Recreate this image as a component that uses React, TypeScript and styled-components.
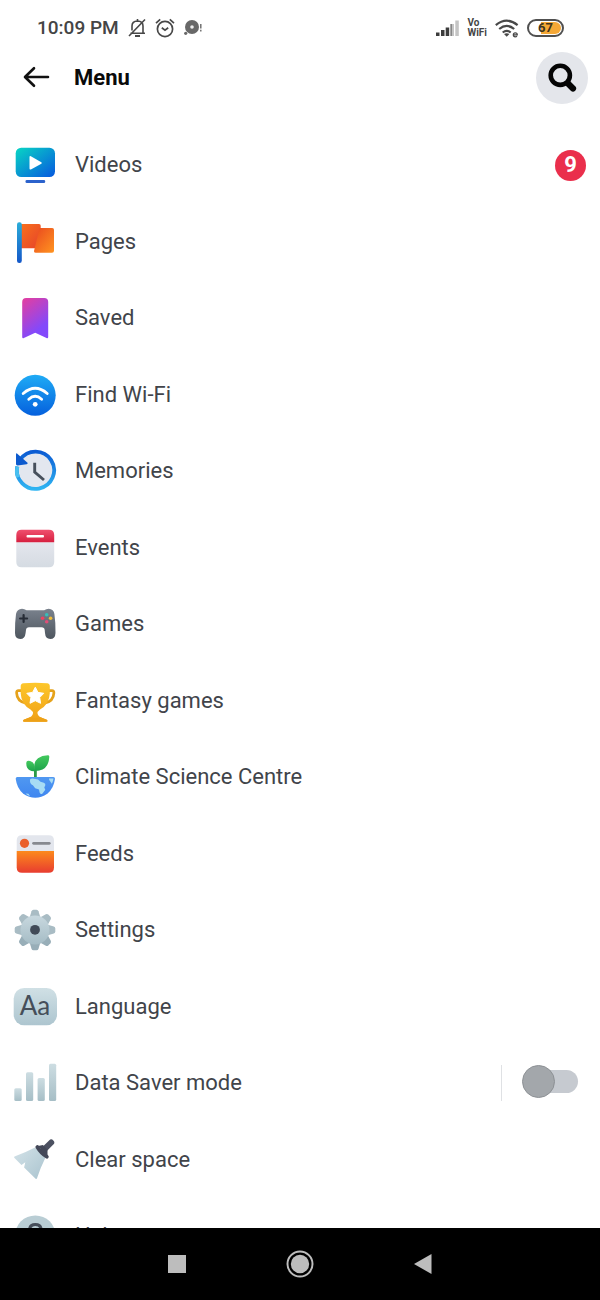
import React from "react";
import type { ReactNode } from "react";
import styled, { createGlobalStyle } from "styled-components";

const GlobalStyle = createGlobalStyle`
  *, *::before, *::after { box-sizing: border-box; }
  body {
    margin: 0;
    background: #fff;
    font-family: Roboto, "Liberation Sans", sans-serif;
  }
`;

const Screen = styled.div`
  display: flex;
  flex-direction: column;
  height: 100vh;
  background: #fff;
`;

const StatusBar = styled.div`
  display: flex;
  flex: none;
  align-items: center;
  justify-content: space-between;
  height: 52px;
  padding: 4px 36px 0 37px;
  color: #454545;
`;

const StatusGroup = styled.div<{ $gap: number }>`
  display: flex;
  align-items: center;
  gap: ${({ $gap }) => $gap}px;
`;

const Time = styled.span`
  font-size: 19px;
  font-weight: 500;
  line-height: 24px;
`;

const Carrier = styled.span`
  display: flex;
  flex-direction: column;
  font-size: 10px;
  font-weight: 700;
  line-height: 10px;
`;

const Battery = styled.span`
  display: flex;
  align-items: center;
  justify-content: center;
  width: 37px;
  height: 18px;
  padding: 1px;
  border: 2px solid #505050;
  border-radius: 9px;
  background: linear-gradient(90deg, #fff 35%, #f5a836 35%) content-box;
  color: #40331c;
  font-size: 13px;
  font-weight: 700;
  line-height: 12px;
`;

const Header = styled.header`
  display: flex;
  flex: none;
  align-items: center;
  height: 52px;
  padding: 0 12px 0 20px;
`;

const IconButton = styled.button`
  display: flex;
  align-items: center;
  justify-content: center;
  width: 32px;
  height: 32px;
  padding: 0;
  border: 0;
  background: none;
  cursor: pointer;
`;

const SearchButton = styled(IconButton)`
  width: 52px;
  height: 52px;
  border-radius: 50%;
  background: #e4e6eb;
`;

const Title = styled.h1`
  flex: 1;
  margin: 0 0 0 22px;
  color: #0a0a0a;
  font-size: 22px;
  font-weight: 700;
  line-height: 28px;
`;

const Main = styled.main`
  flex: 1;
  min-height: 0;
  overflow-y: auto;
  scrollbar-width: none;
`;

const List = styled.ul`
  margin: 0;
  padding: 23px 0 0;
  list-style: none;
`;

const Row = styled.li`
  display: flex;
  align-items: center;
  height: 76px;
  padding-right: 14px;
  &:nth-child(even) { height: 77px; }
`;

const RowLink = styled.a`
  display: flex;
  flex: 1;
  align-items: center;
  gap: 18px;
  height: 100%;
  padding-left: 13px;
  color: #41444a;
  font-size: 22px;
  line-height: 28px;
  text-decoration: none;
`;

const RowIcon = styled.svg`
  display: block;
  flex: none;
  width: 44px;
  height: 44px;
`;

const Badge = styled.span`
  display: flex;
  align-items: center;
  justify-content: center;
  width: 31px;
  height: 31px;
  border-radius: 50%;
  background: #ea2f4c;
  color: #fff;
  font-size: 22px;
  font-weight: 700;
  line-height: 28px;
`;

const ToggleArea = styled.div`
  display: flex;
  align-items: center;
  height: 36px;
  padding: 0 8px 4px 20px;
  border-left: 1px solid #dfe1e4;
`;

const ToggleTrack = styled.span`
  display: grid;
  align-items: center;
  &::before {
    content: "";
    grid-area: 1 / 1;
    height: 23px;
    margin-left: 6px;
    border-radius: 12px;
    background: #c6cad0;
  }
`;

const Toggle = styled.input`
  display: flex;
  grid-area: 1 / 1;
  align-items: center;
  appearance: none;
  width: 56px;
  height: 33px;
  margin: 0;
  cursor: pointer;
  &::before {
    content: "";
    width: 33px;
    height: 33px;
    border: 1px solid #8d9195;
    border-radius: 50%;
    background: #a3a7ab;
  }
  &:checked { justify-content: flex-end; }
`;

const SystemNav = styled.nav`
  display: flex;
  flex: none;
  align-items: center;
  justify-content: center;
  gap: 75px;
  height: 72px;
  background: #000;
`;

const NavButton = styled(IconButton)`
  width: 48px;
  height: 48px;
`;

type GradientProps = { id: string; from: string; to: string; diagonal?: boolean };

const Gradient = ({ id, from, to, diagonal }: GradientProps) => (
  <linearGradient id={id} x1="0" y1="0" x2={diagonal ? "1" : "0"} y2="1">
    <stop offset="0" stopColor={from} />
    <stop offset="1" stopColor={to} />
  </linearGradient>
);

const Icon = ({ children }: { children: ReactNode }) => (
  <RowIcon viewBox="0 0 44 44" aria-hidden="true">{children}</RowIcon>
);

const VideosIcon = () => (
  <Icon>
    <defs><Gradient id="tv" from="#08d6c4" to="#0758df" diagonal /></defs>
    <rect x="2.7" y="4.7" width="39.3" height="29.3" rx="5.5" fill="url(#tv)" />
    <path d="M16.5 14v11.5q0 1.6 1.4.9l10.4-5.600q1.200-.8 0-1.600l-10.400-6q-1.400-.7-1.400.8z" fill="#fff" />
    <rect x="12.5" y="37" width="19.7" height="3" rx="1.3" fill="#2b62cc" />
  </Icon>
);

const PagesIcon = () => (
  <Icon>
    <defs>
      <Gradient id="flagBack" from="#f8701c" to="#e6432b" diagonal />
      <Gradient id="flagFront" from="#e9471f" to="#ff9420" diagonal />
      <Gradient id="pole" from="#2badd9" to="#1457c9" />
    </defs>
    <path d="M8 4h18q1.700 0 1.700 1.800V28.300H8z" fill="url(#flagBack)" />
    <path d="M26.500 8h12.700q1.800 0 1.800 1.800v20.900q0 2-2 2H22.500q-1.800 0-1.500-1.700z" fill="url(#flagFront)" />
    <rect x="4" y="2.300" width="4.800" height="40.700" rx="2.200" fill="url(#pole)" />
  </Icon>
);

const SavedIcon = () => (
  <Icon>
    <defs>
      <linearGradient id="saved" x1="0.2" y1="0" x2="0.6" y2="0.8">
        <stop offset="0" stopColor="#dd3fa6" />
        <stop offset="1" stopColor="#8349fb" />
      </linearGradient>
    </defs>
    <path d="M9.200 6q0-4 4-4h18q4 0 4 4v35q0 1.800-1.700 1.100L22.200 36.800 10.900 42.100q-1.700.7-1.700-1.100z" fill="url(#saved)" />
  </Icon>
);

const WifiIcon = () => (
  <Icon>
    <defs><Gradient id="wifi" from="#1fabf5" to="#0560dd" /></defs>
    <circle cx="22.200" cy="22.300" r="20.500" fill="url(#wifi)" />
    <g fill="none" stroke="#fff" strokeWidth="2.900" strokeLinecap="round">
      <path d="M10.200 20.500q12-10.300 24 0" />
      <path d="M15.800 26.200q6.400-5.800 12.800 0" />
    </g>
    <circle cx="22.200" cy="31.300" r="2.400" fill="#fff" />
  </Icon>
);

const MemoriesIcon = () => (
  <Icon>
    <defs><Gradient id="ring" from="#0b5bd3" to="#2fb4f2" /></defs>
    <circle cx="22.300" cy="22" r="18.600" fill="#e3e7ef" />
    <path d="M7.200 10.700A18.600 18.600 0 1 1 4.300 17.500" fill="none" stroke="url(#ring)" strokeWidth="3.800" />
    <path d="M4.300 17.500a18.600 18.600 0 0 0 .6 10.800" fill="none" stroke="#48c0f0" strokeWidth="3.800" />
    <path d="M3 5.300q0-1.700 1.300-.6l9.900 8.900q1.300 1.300-.5 1.600L4.500 16.400Q3 16.500 3 15z" fill="#0c5ace" />
    <path d="M21.700 13.800V23l9.300 8" fill="none" stroke="#47505c" strokeWidth="2.900" />
  </Icon>
);

const EventsIcon = () => (
  <Icon>
    <defs>
      <Gradient id="calTop" from="#f0506f" to="#d61f3f" />
      <Gradient id="calPage" from="#e4e6ed" to="#d5dbe2" />
    </defs>
    <path d="M3.300 16.300H41.200V36q0 5.300-5.300 5.300H8.600Q3.300 41.300 3.300 36z" fill="url(#calPage)" />
    <path d="M3.300 16.300V9q0-5.300 5.300-5.300h27.300q5.300 0 5.300 5.300v7.300z" fill="url(#calTop)" />
    <rect x="13.500" y="9" width="17.500" height="2.600" rx="1" fill="#fff" />
  </Icon>
);

const GamesIcon = () => (
  <Icon>
    <defs><Gradient id="pad" from="#7a828d" to="#4e565f" /></defs>
    <path d="M3 12Q4 7 9 6.700q2.500 0 4.500 1.600h17.700q2-1.600 4.500-1.600 5 .3 5.700 5.300 1.300 9 1.100 19-.2 6-5.300 6-4.800-.2-5.200-6l-.3-3q-.3-2.700-3-2.700H16q-2.700 0-3 2.700l-.4 3Q12 37 7.200 37 2.100 36.800 2 31q-.2-10 1-19z" fill="url(#pad)" />
    <path d="M10.600 13v7M7.100 16.500h7" stroke="#262c36" strokeWidth="2.200" strokeLinecap="round" />
    <circle cx="33.700" cy="12.800" r="1.800" fill="#36bfb9" />
    <circle cx="29.600" cy="16.300" r="1.800" fill="#ef4260" />
    <circle cx="37.600" cy="16.300" r="1.800" fill="#f0bd3a" />
    <circle cx="33.700" cy="19.800" r="1.800" fill="#e04f78" />
  </Icon>
);

const TrophyIcon = () => (
  <Icon>
    <defs><Gradient id="cup" from="#fdc72b" to="#f0a017" /></defs>
    <g fill="none" stroke="#e5a21b" strokeWidth="2.700">
      <path d="M9 11.700H5.500q-2 0-1.900 2.200Q4 22.500 13 24.200" />
      <path d="M35.500 11.700H39q2 0 1.900 2.200-.4 8.600-9.400 10.300" />
    </g>
    <path d="M7.700 7.300q0-2.700 2.700-3 12-1 23.700 0 2.700.3 2.700 3v7Q36.300 25.500 27 30.500L24.500 33q-.3 3.500 3 5.300l6.300 2.400q1.600 1.800-.6 2H11.300q-2.200-.2-.6-2l6.300-2.400q3.300-1.800 3-5.300l-2.500-2.500Q8.200 25.500 7.700 14.300z" fill="url(#cup)" />
    <path d="M17 38.300Q22 40.300 27.500 38.300l6.300 2.400q1.600 1.800-.6 2H11.300q-2.200-.2-.6-2z" fill="#eda117" />
    <path d="M22.300 8.200l2.700 5.200 5.800.9-4.100 4.200.9 5.800-5.300-2.600-5.300 2.600.9-5.800-4.100-4.200 5.800-.9z" fill="#fff" stroke="#fff" strokeWidth="1" strokeLinejoin="round" />
  </Icon>
);

const ClimateIcon = () => (
  <Icon>
    <defs>
      <Gradient id="leaf" from="#44ca5e" to="#1ea34a" />
      <Gradient id="globe" from="#5098f1" to="#3f86f0" />
    </defs>
    <path d="M4.400 22H40.300q1.800 0 1.700 1.800Q40.800 33.500 34.300 38.700 28.500 42.700 22.300 42.700T10.300 38.700Q3.900 33.500 2.700 23.800 2.600 22 4.400 22z" fill="url(#globe)" />
    <path d="M17 24.500q1.500-1.500 4-.8l4 .8 2.500 2.300 3.300.9q2 .6 1.500 2.600l-1 2.200 1 2.300-2.800 3.600q-1.600 1.600-2.800-.6l-.7-3.300-3.800-1.200-2.300-3q-3.200-1.500-2.900-4.800zM36 23.500h4.500q-.4 3-1.600 5.200L36.200 25zM12.500 38.500l3 .2 1.500 2.500q-3-.8-4.500-2.700z" fill="#a7dcf4" />
    <path d="M22.400 22v-8" stroke="#2b9a46" strokeWidth="2.800" />
    <path d="M21.500 15.500Q20 7 25 3.200 29 .3 34.800.2q1.700 0 1.500 1.800-.8 12-10 13.400-2.300.4-4.800.1z" fill="url(#leaf)" />
    <path d="M21.800 16.200q-5.400.5-7.600-3.400-1.100-2.300-.9-5 .1-2 2-2 4.200.2 5.800 3.600 1.100 3 .7 6.800z" fill="url(#leaf)" />
  </Icon>
);

const FeedsIcon = () => (
  <Icon>
    <defs><Gradient id="feed" from="#fc8a1c" to="#e83d30" /></defs>
    <path d="M3.700 19V8.600q0-5.300 5.300-5.300h26.700Q41 3.300 41 8.600V19z" fill="#e3e6ed" />
    <path d="M3.700 19H41v16.400q0 5.300-5.300 5.300H9q-5.300 0-5.300-5.300z" fill="url(#feed)" />
    <circle cx="11.500" cy="11.300" r="4.600" fill="#ea602c" />
    <path d="M20.500 11.300h15.800" stroke="#87898f" strokeWidth="2.700" strokeLinecap="round" />
  </Icon>
);

const teeth = [0, 45, 90, 135, 180, 225, 270, 315];

const SettingsIcon = () => (
  <Icon>
    <defs><Gradient id="gear" from="#c8d8df" to="#a5bcc5" /></defs>
    {teeth.map((angle) => (
      <path
        key={angle}
        d="M16.500 10l2-6.800Q19 1.700 20.500 1.700h3q1.500 0 2 1.500l2 6.800z"
        transform={`rotate(${angle} 22 22)`}
        fill={angle > 90 && angle < 270 ? "#98aeb8" : "#a9bcc4"}
      />
    ))}
    <circle cx="22" cy="22" r="14.500" fill="url(#gear)" />
    <circle cx="22" cy="21.800" r="4.900" fill="#414a57" />
  </Icon>
);

const LanguageIcon = () => (
  <Icon>
    <defs><Gradient id="lang" from="#d0e0e5" to="#adc5cf" /></defs>
    <rect x="0.700" y="3" width="43.300" height="37.300" rx="10.500" fill="url(#lang)" />
    <text x="22" y="30" textAnchor="middle" fontFamily="Lato, sans-serif" fontSize="26" fill="#454e59">Aa</text>
  </Icon>
);

const DataIcon = () => (
  <Icon>
    <defs><Gradient id="bars" from="#cddde2" to="#a6bec6" /></defs>
    <g fill="url(#bars)">
      <rect x="1.300" y="27.300" width="7.400" height="12.700" rx="1.500" />
      <rect x="13" y="11.300" width="7.200" height="28.700" rx="1.500" />
      <rect x="24.600" y="17" width="7.200" height="23" rx="1.500" />
      <rect x="36" y="2.700" width="7.200" height="37.300" rx="1.500" />
    </g>
  </Icon>
);

const BroomIcon = () => (
  <Icon>
    <defs><Gradient id="broom" from="#d3e2e8" to="#aac4cf" diagonal /></defs>
    <path d="M22 9.500Q13.500 14 1.500 18.500q-1 .8 0 1.600L8.500 27l3.800-2.700-1.200 5.200 11.500 11.200q1 .7 1.500-.6Q27.500 29.500 32.500 19.500z" fill="url(#broom)" />
    <path d="M38.200 4.500L30 12.700" stroke="#4c5161" strokeWidth="6" strokeLinecap="round" />
    <path d="M24.300 9q4 6.500 9.500 9.700" fill="none" stroke="#434858" strokeWidth="3.800" strokeLinecap="round" />
    <path d="M25 8l9.500 10.500L34.500 12l-4.500-5z" fill="#434858" />
  </Icon>
);

const HelpIcon = () => (
  <Icon>
    <circle cx="22.300" cy="21.700" r="20.300" fill="#b9cdd4" />
    <path d="M16.500 16.500q0-6 5.800-6t5.800 5.500q0 3-3.300 4.800-2.500 1.400-2.500 4.200" fill="none" stroke="#454d59" strokeWidth="3" strokeLinecap="round" />
    <circle cx="22.300" cy="30.500" r="2" fill="#454d59" />
  </Icon>
);

type MenuItem = { label: string; icon: ReactNode; badge?: number; toggle?: boolean };

const items: MenuItem[] = [
  { label: "Videos", icon: <VideosIcon />, badge: 9 },
  { label: "Pages", icon: <PagesIcon /> },
  { label: "Saved", icon: <SavedIcon /> },
  { label: "Find Wi-Fi", icon: <WifiIcon /> },
  { label: "Memories", icon: <MemoriesIcon /> },
  { label: "Events", icon: <EventsIcon /> },
  { label: "Games", icon: <GamesIcon /> },
  { label: "Fantasy games", icon: <TrophyIcon /> },
  { label: "Climate Science Centre", icon: <ClimateIcon /> },
  { label: "Feeds", icon: <FeedsIcon /> },
  { label: "Settings", icon: <SettingsIcon /> },
  { label: "Language", icon: <LanguageIcon /> },
  { label: "Data Saver mode", icon: <DataIcon />, toggle: true },
  { label: "Clear space", icon: <BroomIcon /> },
  { label: "Help", icon: <HelpIcon /> },
];

const BellOffIcon = () => (
  <svg width="18" height="20" viewBox="0 0 18 20" fill="none" stroke="#484848" strokeWidth="1.600" aria-hidden="true">
    <path d="M2.500 15.300H17M15 15V8q0-4.800-5.500-5Q4 3.200 4 8v4.500M9.500 3V1M17 1.500L1 18" />
    <path d="M7 18h5" strokeWidth="2" />
  </svg>
);

const AlarmIcon = () => (
  <svg width="20" height="20" viewBox="0 0 20 20" fill="none" stroke="#484848" strokeWidth="1.700" aria-hidden="true">
    <circle cx="10" cy="11" r="7.600" />
    <path d="M6.800 9.800l3.200 2.400 3.200-2.400M1 5.200L5.200 1.400M19 5.200l-4.200-3.800" />
  </svg>
);

const ChatIcon = () => (
  <svg width="18" height="20" viewBox="0 0 18 20" aria-hidden="true">
    <circle cx="8" cy="9" r="7" fill="#686868" />
    <circle cx="8" cy="9" r="1.800" fill="#eee" />
    <circle cx="1.700" cy="15.300" r="1.600" fill="#686868" />
    <path d="M16.800 6v4.500M16.800 11.800v1.600" stroke="#686868" strokeWidth="1.400" />
  </svg>
);

const SignalIcon = () => (
  <svg width="23" height="16" viewBox="0 0 23 16" aria-hidden="true">
    <path d="M0 12.500h3.500V16H0zM5 10h3.500v6H5zM9.700 7.500h3.500V16H9.700z" fill="#3c3c3c" />
    <path d="M14.500 4H18v12h-3.500zM19.300 0.500h3.500V16h-3.500z" fill="#c4c4c4" />
    <path d="M14.500 4h1.300v12h-1.300z" fill="#777" />
  </svg>
);

const StatusWifiIcon = () => (
  <svg width="24" height="19" viewBox="0 0 24 19" fill="none" stroke="#484848" strokeWidth="2.200" aria-hidden="true">
    <path d="M.8 6.200q10.900-9 21.800 0M4.200 10q7.500-6.200 15 0M7.700 13.500q4-3.200 8 0" />
    <path d="M9 15l2.700 2.700L14.400 15q-2.700-1.600-5.400 0z" fill="#484848" stroke="none" />
    <path d="M18.300 15.800h4q0-2-2-2t-2 2q0 2 2 2 1 0 1.700-.6" strokeWidth="1.200" />
  </svg>
);

export default function App() {
  return (
    <>
      <GlobalStyle />
      <Screen>
        <StatusBar>
          <StatusGroup $gap={9}>
            <Time>10:09 PM</Time>
            <BellOffIcon />
            <AlarmIcon />
            <ChatIcon />
          </StatusGroup>
          <StatusGroup $gap={8}>
            <SignalIcon />
            <Carrier><span>Vo</span><span>WiFi</span></Carrier>
            <StatusWifiIcon />
            <Battery>67</Battery>
          </StatusGroup>
        </StatusBar>
        <Header>
          <IconButton type="button" aria-label="Back">
            <svg width="32" height="32" viewBox="0 0 32 32" fill="none" stroke="#111" strokeWidth="2.600" strokeLinecap="round" strokeLinejoin="round" aria-hidden="true">
              <path d="M28 15H5.500M14 6.200L5 15l9 8.800" />
            </svg>
          </IconButton>
          <Title>Menu</Title>
          <SearchButton type="button" aria-label="Search">
            <svg width="32" height="32" viewBox="0 0 32 32" fill="none" stroke="#050505" aria-hidden="true">
              <circle cx="14.300" cy="13.300" r="9.600" strokeWidth="4.600" />
              <path d="M22 21.500l5 5" strokeWidth="6.200" strokeLinecap="round" />
            </svg>
          </SearchButton>
        </Header>
        <Main>
          <List>
            {items.map(({ label, icon, badge, toggle }) => (
              <Row key={label}>
                {toggle ? (
                  <>
                    <RowLink as="label" htmlFor="data-saver">{icon}{label}</RowLink>
                    <ToggleArea>
                      <ToggleTrack><Toggle id="data-saver" type="checkbox" /></ToggleTrack>
                    </ToggleArea>
                  </>
                ) : (
                  <RowLink href="#">{icon}{label}</RowLink>
                )}
                {badge !== undefined && <Badge>{badge}</Badge>}
              </Row>
            ))}
          </List>
        </Main>
        <SystemNav aria-label="System">
          <NavButton type="button" aria-label="Recent apps">
            <svg width="18" height="18" aria-hidden="true"><rect width="18" height="18" fill="#bdbdbd" /></svg>
          </NavButton>
          <NavButton type="button" aria-label="Home">
            <svg width="28" height="28" viewBox="0 0 28 28" aria-hidden="true">
              <circle cx="14" cy="14" r="12.500" fill="none" stroke="#bdbdbd" strokeWidth="2" />
              <circle cx="14" cy="14" r="9.200" fill="#bdbdbd" />
            </svg>
          </NavButton>
          <NavButton type="button" aria-label="Back to previous app">
            <svg width="18" height="20" viewBox="0 0 18 20" aria-hidden="true"><path d="M17.500 0v20L0 10z" fill="#bdbdbd" /></svg>
          </NavButton>
        </SystemNav>
      </Screen>
    </>
  );
}
